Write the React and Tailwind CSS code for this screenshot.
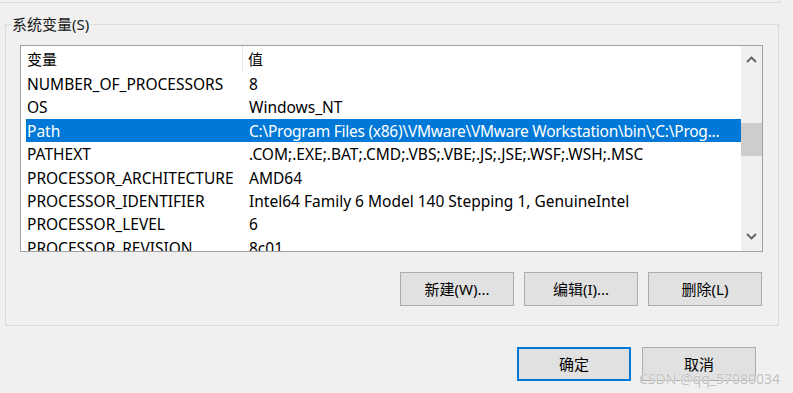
const rows = [
  ['NUMBER_OF_PROCESSORS', '8'],
  ['OS', 'Windows_NT'],
  ['Path', 'C:\\Program Files (x86)\\VMware\\VMware Workstation\\bin\\;C:\\Prog...', true],
  ['PATHEXT', '.COM;.EXE;.BAT;.CMD;.VBS;.VBE;.JS;.JSE;.WSF;.WSH;.MSC'],
  ['PROCESSOR_ARCHITECTURE', 'AMD64'],
  ['PROCESSOR_IDENTIFIER', 'Intel64 Family 6 Model 140 Stepping 1, GenuineIntel'],
  ['PROCESSOR_LEVEL', '6'],
  ['PROCESSOR_REVISION', '8c01'],
]

function Chevron({ up }) {
  return (
    <svg width="11" height="7" viewBox="0 0 11 7" className="text-[#606060]">
      <polyline
        points={up ? '1,6 5.5,1.5 10,6' : '1,1 5.5,5.5 10,1'}
        fill="none"
        stroke="currentColor"
        strokeWidth="1.8"
      />
    </svg>
  )
}

function Btn({ children, primary }) {
  return (
    <button
      className={
        'w-[114px] h-[34px] bg-[#e1e1e1] text-[15px] text-[#000] flex items-center justify-center ' +
        (primary ? 'border-2 border-[#0078d7]' : 'border border-[#adadad]')
      }
    >
      {children}
    </button>
  )
}

export default function App() {
  return (
    <div className="relative w-[793px] h-[393px] overflow-hidden bg-[#f0f0f0] font-['Noto_Sans','Noto_Sans_CJK_SC',sans-serif] text-[15.5px] text-[#000]">
      <div className="h-[3px] w-[780px] border-b border-r border-[#dcdcdc]" />

      <div className="relative mt-[21px] ml-[5px] w-[774px] h-[302px] border border-[#dcdcdc]">
        <div className="absolute -top-[13px] left-[5px] px-[1px] bg-[#f0f0f0] text-[#1a1a1a] text-[15px] leading-[24px]">
          系统变量(S)
        </div>

        <div className="mt-[20px] ml-[14px] w-[743px] h-[207px] border border-[#a0a0a0] bg-white flex">
          <div className="w-[720px] overflow-hidden">
            <div className="flex h-[26px] items-center text-[15px]">
              <div className="w-[222px] pl-[6px] pt-[1px] h-full flex items-center border-r border-[#e5e5e5]">变量</div>
              <div className="pl-[5px] pt-[1px]">值</div>
            </div>
            {rows.map(([k, v, sel]) => (
              <div
                key={k}
                className={
                  'ml-[5px] h-[23.4px] pt-[2px] flex items-center whitespace-nowrap overflow-hidden ' +
                  (sel ? 'bg-[#0078d7] text-white' : '')
                }
              >
                <div className="w-[217px] shrink-0 pl-[1px]">{k}</div>
                <div className={'pl-[6px] ' + (sel ? 'tracking-[-0.25px]' : '')}>{v}</div>
              </div>
            ))}
          </div>
          <div className="w-[21px] bg-[#f0f0f0] flex flex-col items-center">
            <div className="h-[27px] flex items-center justify-center">
              <Chevron up />
            </div>
            <div className="mt-[50px] w-full h-[33px] bg-[#cdcdcd]" />
            <div className="mt-auto h-[24px] flex items-start justify-center pt-[6px]">
              <Chevron />
            </div>
          </div>
        </div>

        <div className="mt-[20px] mr-[16px] flex justify-end gap-[10px]">
          <Btn>新建(W)...</Btn>
          <Btn>编辑(I)...</Btn>
          <Btn>删除(L)</Btn>
        </div>
      </div>

      <div className="mt-[21px] mr-[37px] flex justify-end gap-[11px]">
        <Btn primary>确定</Btn>
        <Btn>取消</Btn>
      </div>

      <div className="absolute left-[639px] top-[369px] whitespace-nowrap text-[14px] leading-[20px] text-[#bdbdbd] [text-shadow:0_0_1px_#fff,0_0_1px_#fff]">
        CSDN @qq_57080034
      </div>
    </div>
  )
}
